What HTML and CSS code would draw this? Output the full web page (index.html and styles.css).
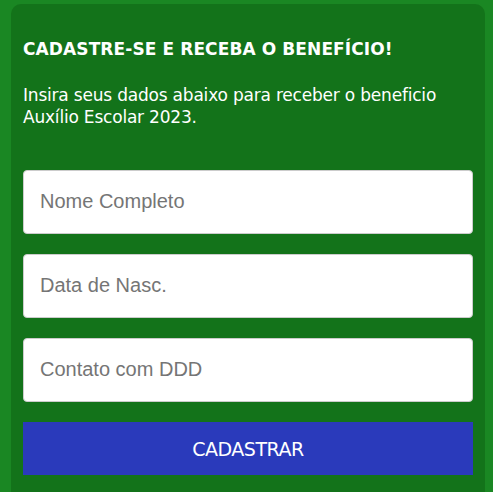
FILE: index.html
```html
<!DOCTYPE html>
<html lang="pt-BR">

<head>
    <meta charset="UTF-8">
    <title>Cadastro</title>
    <link rel="stylesheet" href="styles.css">
</head>

<body>
    <div class="card">
        <h2 class="titulo">CADASTRE-SE E RECEBA O BENEFÍCIO!</h2>
        <p class="texto">Insira seus dados abaixo para receber o beneficio Auxílio Escolar 2023.</p>

        <form class="form">
            <input type="text" placeholder="Nome Completo">
            <input type="text" placeholder="Data de Nasc.">
            <input type="text" placeholder="Contato com DDD">
            <button type="button">CADASTRAR</button>
        </form>
    </div>
</body>

</html>
```

FILE: styles.css
```css
* {
    padding: 0;
    margin: 0;
    box-sizing: border-box;
}

body {
    background: #1a8723;
    font-family: "DejaVu Sans", Verdana, sans-serif;
    padding: 4px 8px 0 11px;
    height: 492px;
    overflow: hidden;
}

.card {
    background: #13731a;
    border-radius: 10px;
    width: 474px;
    padding: 34px 12px 40px;
    min-height: 520px;
}

.titulo {
    color: #fff;
    font-size: 17px;
    font-weight: bold;
    letter-spacing: 0.1px;
    line-height: 22px;
}

.texto {
    color: #fff;
    font-size: 17px;
    letter-spacing: -0.2px;
    line-height: 22px;
    margin-top: 24px;
}

.form {
    display: flex;
    flex-direction: column;
    gap: 20.5px;
    margin-top: 42px;
}

.form input {
    height: 63.5px;
    border: 1px solid #ccc;
    border-radius: 4px;
    background: #fff;
    padding: 0 16px;
    font-family: "Liberation Sans", Arial, sans-serif;
    font-size: 20px;
    color: #333;
    outline: none;
}

.form input::placeholder {
    color: #757575;
}

.form button {
    height: 53px;
    border: none;
    background: #2a3abb;
    color: #fff;
    font-family: "DejaVu Sans", Verdana, sans-serif;
    font-size: 19px;
    letter-spacing: -0.5px;
    cursor: pointer;
}
```
